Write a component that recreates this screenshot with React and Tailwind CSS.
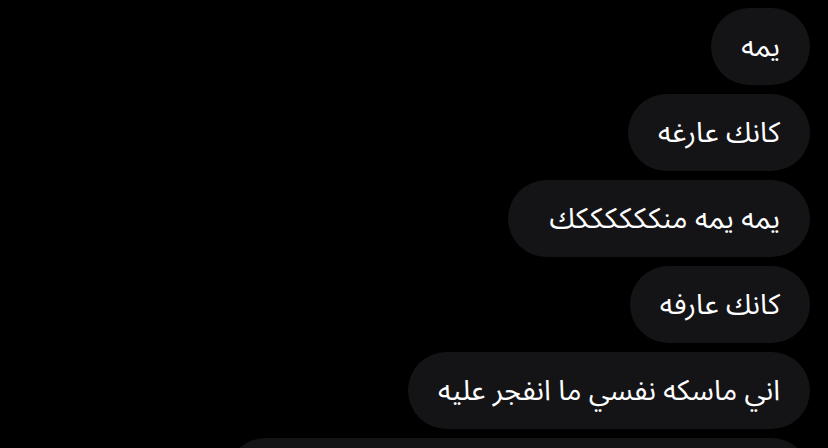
export default function App() {
  const msgs = [
    { t: "يمه", c: "px-[30px]" },
    { t: "كانك عارغه", c: "px-[30px]" },
    { t: "يمه يمه منككككككك", c: "pr-[30px] pl-[42px]" },
    { t: "كانك عارفه", c: "px-[30px]" },
    { t: "اني ماسكه نفسي ما انفجر عليه", c: "px-[30px]" },
  ];
  return (
    <div className="w-[828px] h-[448px] bg-black overflow-hidden flex flex-col items-end gap-[9px] pt-[8px] pr-[18px]" style={{ fontFamily: '"Noto Sans Arabic", "DejaVu Sans", sans-serif' }}>
      {msgs.map((m, i) => (
        <div key={i} dir="rtl" className={"h-[77px] shrink-0 rounded-full bg-[#141416] flex items-center text-white text-[28.5px] leading-none " + m.c}>
          <span className="pt-[2px]">{m.t}</span>
        </div>
      ))}
      <div className="h-[77px] w-[583px] shrink-0 rounded-full bg-[#141416]" />
    </div>
  );
}
